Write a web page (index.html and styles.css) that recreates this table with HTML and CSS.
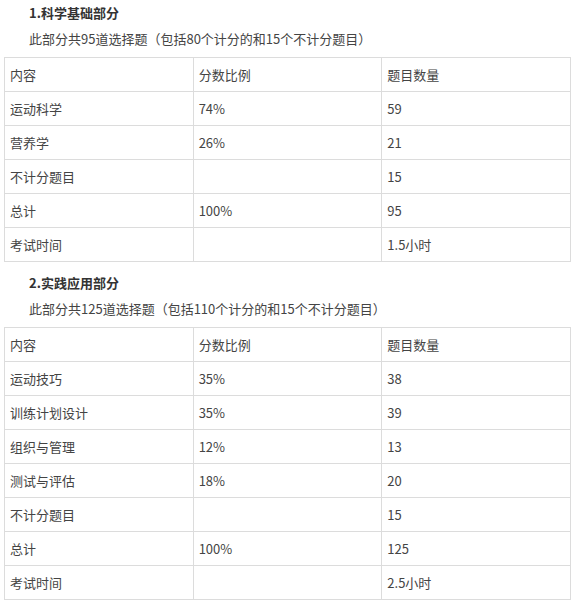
FILE: index.html
```html
<!DOCTYPE html>
<html lang="zh">
<head>
<meta charset="utf-8">
<link rel="stylesheet" href="styles.css">
</head>
<body>
<div class="page">
  <h3 class="sec-title">1.科学基础部分</h3>
  <p class="sec-desc">此部分共95道选择题（包括80个计分的和15个不计分题目）</p>
  <table class="grid">
    <tr><td>内容</td><td>分数比例</td><td>题目数量</td></tr>
    <tr><td>运动科学</td><td>74%</td><td>59</td></tr>
    <tr><td>营养学</td><td>26%</td><td>21</td></tr>
    <tr><td>不计分题目</td><td></td><td>15</td></tr>
    <tr><td>总计</td><td>100%</td><td>95</td></tr>
    <tr><td>考试时间</td><td></td><td>1.5小时</td></tr>
  </table>
  <h3 class="sec-title">2.实践应用部分</h3>
  <p class="sec-desc">此部分共125道选择题（包括110个计分的和15个不计分题目）</p>
  <table class="grid">
    <tr><td>内容</td><td>分数比例</td><td>题目数量</td></tr>
    <tr><td>运动技巧</td><td>35%</td><td>38</td></tr>
    <tr><td>训练计划设计</td><td>35%</td><td>39</td></tr>
    <tr><td>组织与管理</td><td>12%</td><td>13</td></tr>
    <tr><td>测试与评估</td><td>18%</td><td>20</td></tr>
    <tr><td>不计分题目</td><td></td><td>15</td></tr>
    <tr><td>总计</td><td>100%</td><td>125</td></tr>
    <tr><td>考试时间</td><td></td><td>2.5小时</td></tr>
  </table>
</div>
</body>
</html>
```

FILE: styles.css
```css
html, body {
  margin: 0;
  padding: 0;
  background: #fff;
}
body {
  font-family: "Noto Sans CJK SC", "Noto Sans", sans-serif;
  font-size: 13px;
  color: #444;
}
.page {
  padding: 0 4px 0 4px;
}
.sec-title {
  margin: 0;
  padding-left: 25px;
  font-size: 13px;
  font-weight: bold;
  color: #333;
  height: 26px;
  line-height: 26px;
}
.sec-desc {
  margin: 0;
  padding-left: 25px;
  height: 26px;
  line-height: 26px;
  margin-bottom: 5px;
}
.grid {
  border-collapse: collapse;
  width: 567px;
  table-layout: fixed;
  margin-bottom: 8px;
}
.grid td {
  border: 1px solid #dcdcdc;
  height: 34px;
  padding: 0 5px;
  box-sizing: border-box;
  vertical-align: middle;
  line-height: 20px;
}
```
